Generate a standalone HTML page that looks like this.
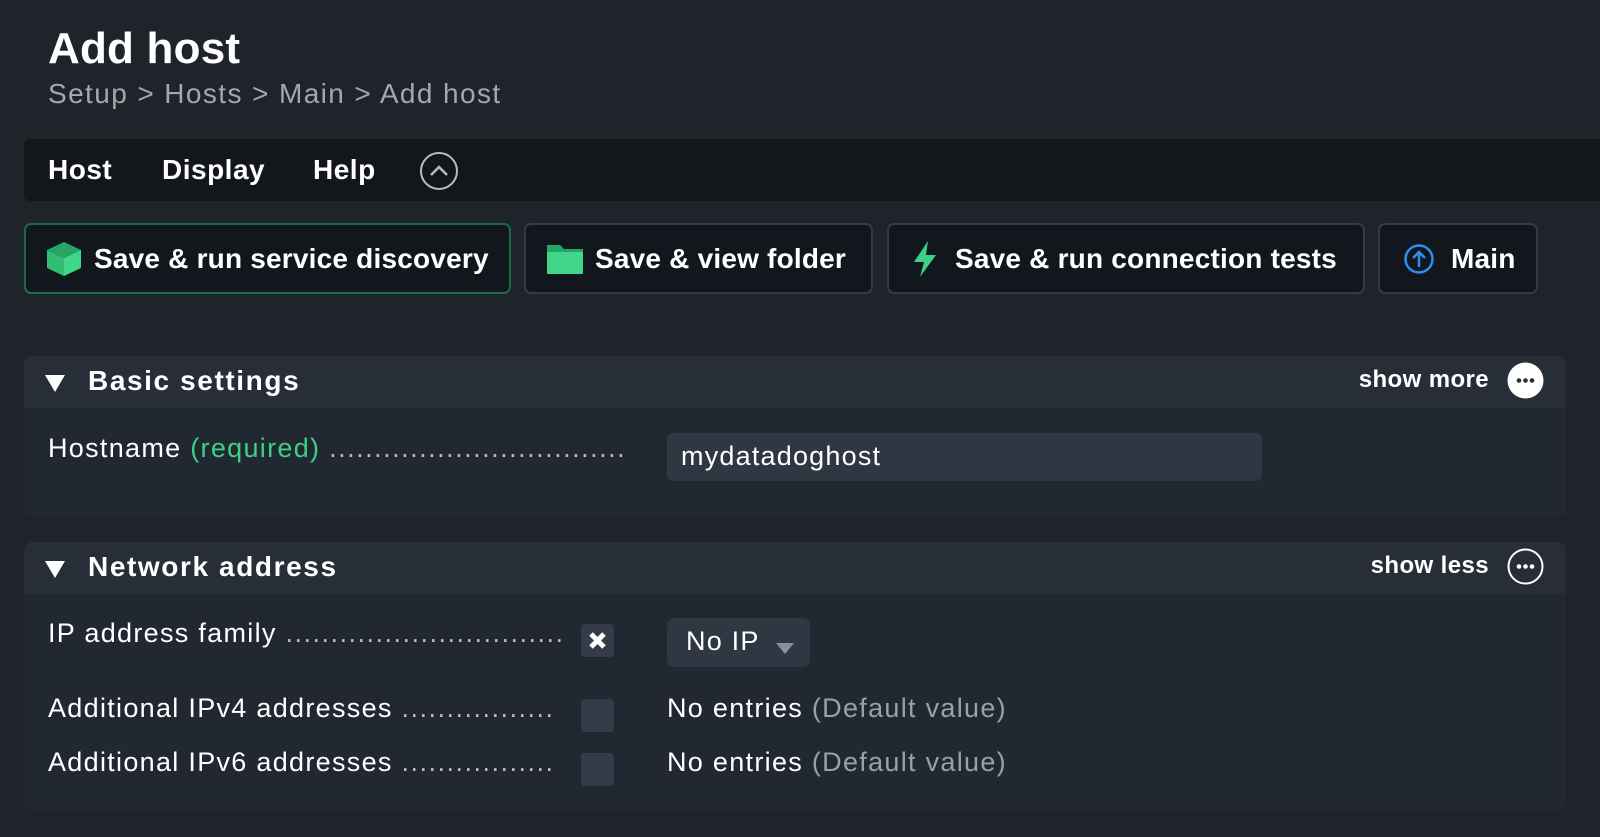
<!DOCTYPE html>
<html><head><meta charset="utf-8"><style>
*{margin:0;padding:0;box-sizing:border-box}
body{width:1600px;height:837px;background:#1f232a;font-family:"Liberation Sans",sans-serif;color:#fff;position:relative;overflow:hidden}
.a{position:absolute;white-space:nowrap}
.btn{position:absolute;top:223px;height:71px;background:#12171d;border:2px solid #343b45;border-radius:7px;font-weight:bold;font-size:28px;letter-spacing:0.2px;display:flex;align-items:center}
.sec{position:absolute;left:24px;width:1542px;background:#222831;border-radius:8px;overflow:hidden}
.hd{height:52px;background:#272e38;position:relative}
.ht{position:absolute;left:64px;top:9px;font-size:28px;font-weight:bold;letter-spacing:1.6px}
.tri{position:absolute;left:21px;top:19px;width:0;height:0;border-left:10px solid transparent;border-right:10px solid transparent;border-top:17px solid #fff}
.lbl{font-size:27px;color:#fff;letter-spacing:1.3px}
.dots{color:#bbb;letter-spacing:1.5px}
.cb{position:absolute;left:581px;width:33px;height:33px;background:#333c48;border-radius:4px}
</style></head><body>
<div class="a" style="left:48px;top:24px;font-size:44px;font-weight:bold;letter-spacing:0.2px">Add host</div>
<div class="a" style="left:48px;top:78px;font-size:28px;color:#a3a8ae;letter-spacing:1.4px">Setup &gt; Hosts &gt; Main &gt; Add host</div>

<div class="a" style="left:24px;top:139px;width:1576px;height:62px;background:#13171c;border-radius:6px 0 0 6px"></div>
<div class="a" style="left:48px;top:154px;font-size:28px;font-weight:bold;letter-spacing:0.5px">Host</div>
<div class="a" style="left:162px;top:154px;font-size:28px;font-weight:bold;letter-spacing:0.5px">Display</div>
<div class="a" style="left:313px;top:154px;font-size:28px;font-weight:bold;letter-spacing:0.5px">Help</div>
<svg class="a" style="left:418px;top:150px" width="42" height="42"><circle cx="21" cy="21" r="18" fill="none" stroke="#bbb" stroke-width="2"/><path d="M13 25 L21 17 L29 25" fill="none" stroke="#bbb" stroke-width="2.5"/></svg>

<div class="btn" style="left:24px;width:487px;border-color:#1d6b44">
<svg style="margin-left:19px" width="38" height="38" viewBox="0 0 38 38"><path d="M19 2 L36 10 L19 18 L2 10Z" fill="#25a566"/><path d="M2 10 L19 18 L19 36 L2 28Z" fill="#2fbe72"/><path d="M36 10 L19 18 L19 36 L36 28Z" fill="#41d68a"/></svg>
<span style="margin-left:11px">Save &amp; run service discovery</span></div>
<div class="btn" style="left:524px;width:349px">
<svg style="margin-left:20px" width="38" height="32" viewBox="0 0 38 32"><path d="M1 2 h13 l4 4 h19 v24 h-36z" fill="#25a566"/><rect x="1" y="9" width="36" height="22" rx="1" fill="#41d68a"/></svg>
<span style="margin-left:11px">Save &amp; view folder</span></div>
<div class="btn" style="left:887px;width:478px">
<svg style="margin-left:22px" width="28" height="38" viewBox="0 0 28 38"><path d="M17 1 L3 22 H13 L9 37 L25 15 H15 Z" fill="#3ecf82"/></svg>
<span style="margin-left:16px">Save &amp; run connection tests</span></div>
<div class="btn" style="left:1378px;width:160px">
<svg style="margin-left:23px" width="32" height="32" viewBox="0 0 32 32"><circle cx="16" cy="16" r="13.5" fill="none" stroke="#2c8ff0" stroke-width="2.5"/><path d="M16 24 V9 M10 15 L16 9 L22 15" fill="none" stroke="#2c8ff0" stroke-width="2.5"/></svg>
<span style="margin-left:16px">Main</span></div>

<div class="sec" style="top:356px;height:161px">
<div class="hd"><div class="tri"></div><div class="ht">Basic settings</div>
<div class="a" style="right:77px;top:10px;font-size:24px;font-weight:bold;letter-spacing:0.4px">show more</div>
<svg class="a" style="right:22px;top:6px" width="37" height="37"><circle cx="18.5" cy="18.5" r="18" fill="#fff"/><circle cx="12" cy="18.5" r="2.3" fill="#272e38"/><circle cx="18.5" cy="18.5" r="2.3" fill="#272e38"/><circle cx="25" cy="18.5" r="2.3" fill="#272e38"/></svg></div>
<div class="a lbl" style="left:24px;top:77px">Hostname <span style="color:#3ecf82">(required)</span> <span class="dots">.................................</span></div>
<div class="a" style="left:643px;top:77px;width:595px;height:48px;background:#2f3743;border-radius:6px;font-size:27px;padding:8px 0 0 14px;letter-spacing:1.2px">mydatadoghost</div>
</div>

<div class="sec" style="top:542px;height:269px">
<div class="hd"><div class="tri"></div><div class="ht">Network address</div>
<div class="a" style="right:77px;top:10px;font-size:24px;font-weight:bold;letter-spacing:0.4px">show less</div>
<svg class="a" style="right:22px;top:6px" width="37" height="37"><circle cx="18.5" cy="18.5" r="17" fill="none" stroke="#fff" stroke-width="2"/><circle cx="12" cy="18.5" r="2.3" fill="#fff"/><circle cx="18.5" cy="18.5" r="2.3" fill="#fff"/><circle cx="25" cy="18.5" r="2.3" fill="#fff"/></svg></div>
<div class="a lbl" style="left:24px;top:76px">IP address family <span class="dots">...............................</span></div>
<div class="a lbl" style="left:24px;top:151px">Additional IPv4 addresses <span class="dots">.................</span></div>
<div class="a lbl" style="left:24px;top:205px">Additional IPv6 addresses <span class="dots">.................</span></div>
<div class="cb" style="left:557px;top:82px"><svg width="33" height="33"><path d="M10 10 L23 23 M23 10 L10 23" stroke="#fff" stroke-width="5"/></svg></div>
<div class="cb" style="left:557px;top:157px"></div>
<div class="cb" style="left:557px;top:211px"></div>
<div class="a" style="left:643px;top:76px;width:143px;height:49px;background:#2f3743;border-radius:7px;font-size:27px;padding:8px 0 0 19px;letter-spacing:1.2px">No IP</div>
<div class="a" style="left:752px;top:101px;width:0;height:0;border-left:9px solid transparent;border-right:9px solid transparent;border-top:11px solid #8a9099"></div>
<div class="a lbl" style="left:643px;top:151px">No entries <span style="color:#9aa0a7">(Default value)</span></div>
<div class="a lbl" style="left:643px;top:205px">No entries <span style="color:#9aa0a7">(Default value)</span></div>
</div>
</body></html>
